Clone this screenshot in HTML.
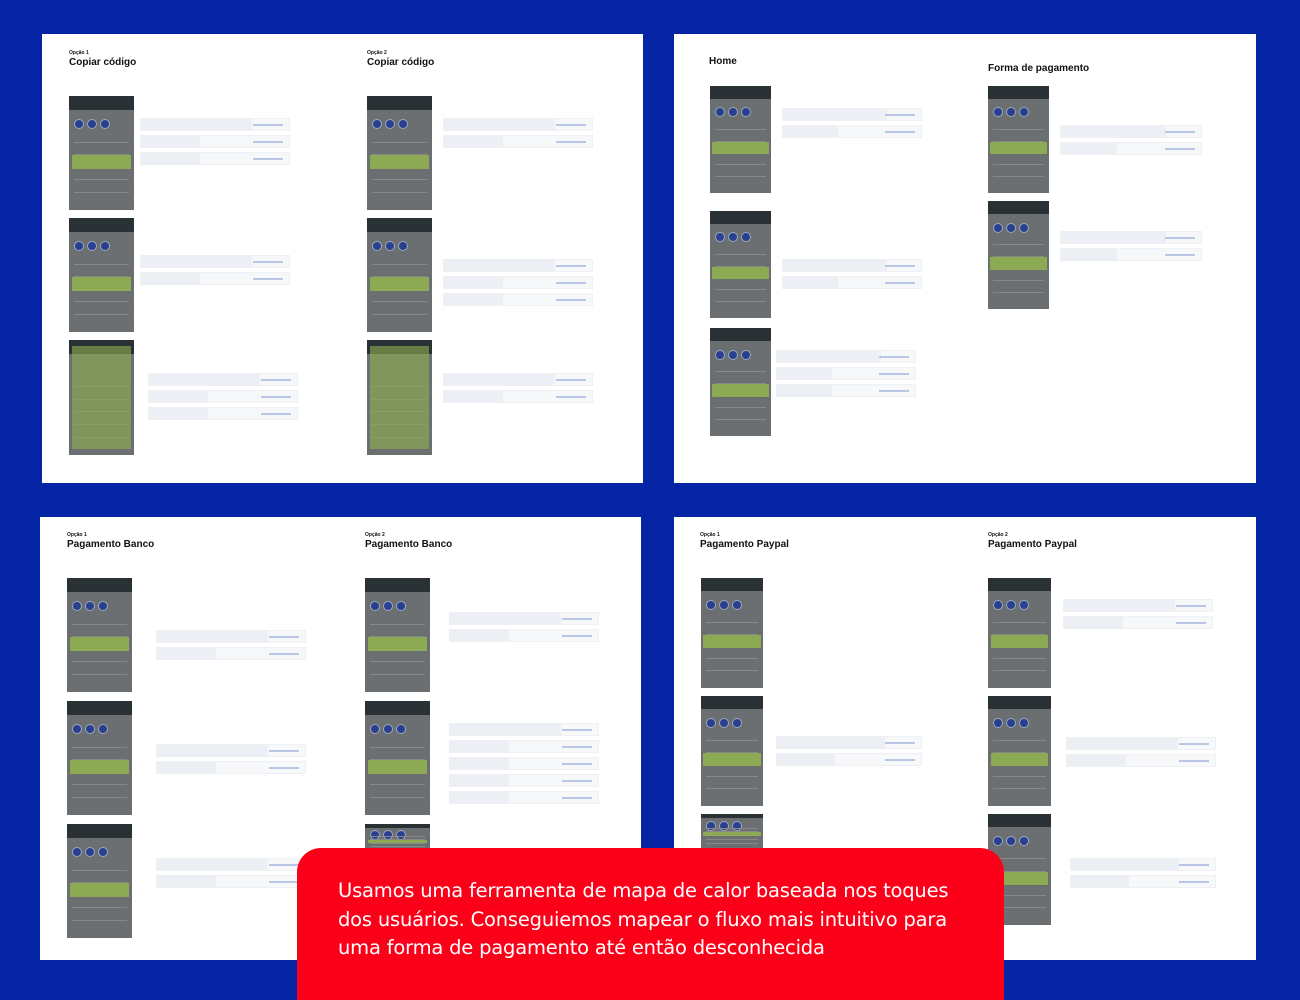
<!DOCTYPE html>
<html><head><meta charset="utf-8">
<style>
*{margin:0;padding:0;box-sizing:border-box}
body{width:1300px;height:1000px;background:#0625a5;position:relative;overflow:hidden;font-family:"Liberation Sans",sans-serif}
.p{position:absolute;background:#fff}
.ph{position:absolute;background:#6b6f72;overflow:hidden}
.ph .h{position:absolute;left:0;right:0;top:0;height:12%;background:#2a3135}
.ph .c{position:absolute;border-radius:50%;background:#2a3f8f;border:1px solid #9ab}
.ph .g{position:absolute;left:4%;right:4%;background:#8fb050;opacity:.9}
.ph .l{position:absolute;left:8%;right:8%;height:1px;background:#888}
.row{position:absolute;height:13px;background:#f7f8fa;border:1px solid #eef0f3}
.row i{position:absolute;left:0;top:0;bottom:0;background:#eceff3}
.row b{position:absolute;right:6px;top:5px;width:30px;height:2px;background:#b9c6e6}
.t1{position:absolute;font-size:5px;font-weight:bold;color:#111}
.t2{position:absolute;font-size:10px;font-weight:bold;color:#111}
.red{position:absolute;left:297px;top:848px;width:707px;height:152px;background:#fd0019;border-radius:24px 24px 0 0;color:#fff;font-size:19.5px;line-height:28.5px;padding:29px 0 0 41px;font-family:"DejaVu Sans","Liberation Sans",sans-serif;letter-spacing:-0.2px}
.red div{width:625px}
</style></head><body>
<div class="p" style="left:42px;top:34px;width:601px;height:449px"></div>
<div class="p" style="left:674px;top:34px;width:582px;height:449px"></div>
<div class="p" style="left:40px;top:517px;width:601px;height:443px"></div>
<div class="p" style="left:674px;top:517px;width:582px;height:443px"></div>
<div id="w"></div>
<div class="red"><div>Usamos uma ferramenta de mapa de calor baseada nos toques dos usuários. Conseguiemos mapear o fluxo mais intuitivo para uma forma de pagamento até então desconhecida</div></div>
<script>
var w=document.getElementById('w'),h='';
function T(x,y,a,b){h+='<div class="t1" style="left:'+x+'px;top:'+y+'px">'+a+'</div><div class="t2" style="left:'+x+'px;top:'+(y+7)+'px">'+b+'</div>';}
function P(x,y,ww,hh,g){var s='<div class="ph" style="left:'+x+'px;top:'+y+'px;width:'+ww+'px;height:'+hh+'px"><div class="h"></div>';
if(g!==2){for(var i=0;i<3;i++)s+='<div class="c" style="left:'+(5+i*13)+'px;top:'+(hh*0.2)+'px;width:10px;height:10px"></div>';}
for(var k=0;k<5;k++)s+='<div class="l" style="top:'+(hh*(0.4+k*0.11))+'px"></div>';
s+='<div class="g" style="top:'+(hh*(g===2?0.05:0.52))+'px;height:'+(g===2?hh*0.9:hh*0.12)+'px;opacity:'+(g===2?0.6:0.9)+'"></div>';
h+=s+'</div>';}
function R(x,y,ww,n){for(var i=0;i<n;i++)h+='<div class="row" style="left:'+x+'px;top:'+(y+i*17)+'px;width:'+ww+'px"><i style="width:'+(i==0?75:40)+'%"></i><b></b></div>';}
T(69,50,'Opção 1','Copiar código');T(367,50,'Opção 2','Copiar código');
P(69,96,65,114);P(69,218,65,114);P(69,340,65,115,2);
P(367,96,65,114);P(367,218,65,114);P(367,340,65,115,2);
R(140,118,150,3);R(140,255,150,2);R(148,373,150,3);R(443,118,150,2);R(443,259,150,3);R(443,373,150,2);
h+='<div class="t2" style="left:709px;top:56px">Home</div><div class="t2" style="left:988px;top:63px">Forma de pagamento</div>';
P(710,86,61,107);P(710,211,61,107);P(710,328,61,108);
P(988,86,61,107);P(988,201,61,108);
R(782,108,140,2);R(782,259,140,2);R(776,350,140,3);R(1060,125,142,2);R(1060,231,142,2);
T(67,532,'Opção 1','Pagamento Banco');T(365,532,'Opção 2','Pagamento Banco');
P(67,578,65,114);P(67,701,65,114);P(67,824,65,114);
P(365,578,65,114);P(365,701,65,114);P(365,824,65,30);
R(156,630,150,2);R(156,744,150,2);R(156,858,150,2);R(449,612,150,2);R(449,723,150,5);
T(700,532,'Opção 1','Pagamento Paypal');T(988,532,'Opção 2','Pagamento Paypal');
P(701,578,62,110);P(701,696,62,110);P(701,814,62,34);
P(988,578,63,110);P(988,696,63,110);P(988,814,63,111);
R(776,736,146,2);R(1063,599,150,2);R(1066,737,150,2);R(1070,858,146,2);
w.innerHTML=h;
</script>
</body></html>
